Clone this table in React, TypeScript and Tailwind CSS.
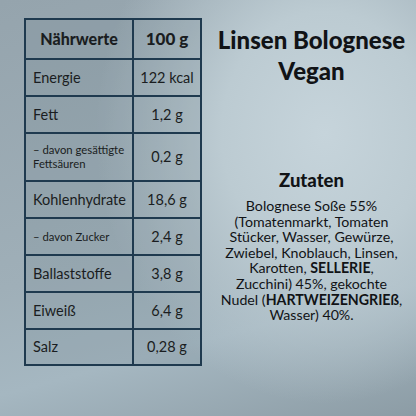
import React from 'react';

type Row = { label: React.ReactNode; value: string; h: string; small?: boolean };

const rows: Row[] = [
  { label: 'Energie', value: '122 kcal', h: 'h-[37px]' },
  { label: 'Fett', value: '1,2 g', h: 'h-[37px]' },
  {
    label: (
      <>
        – davon gesättigte
        <br />
        Fettsäuren
      </>
    ),
    value: '0,2 g',
    h: 'h-[48px]',
    small: true,
  },
  { label: 'Kohlenhydrate', value: '18,6 g', h: 'h-[37px]' },
  { label: '– davon Zucker', value: '2,4 g', h: 'h-[37px]', small: true },
  { label: 'Ballaststoffe', value: '3,8 g', h: 'h-[37px]' },
  { label: 'Eiweiß', value: '6,4 g', h: 'h-[37px]' },
  { label: 'Salz', value: '0,28 g', h: 'h-[36px]' },
];

const NutritionTable: React.FC = () => {
  return (
    <div
      className="grid grid-cols-[108px_68px] border-l-2 border-t-2 border-[#1f3a4f] text-[#1a1d21]"
      style={{ fontFamily: 'Lato, "Noto Sans", sans-serif' }}
    >
      <div className="h-[40px] flex items-center justify-center border-r-2 border-b-2 border-[#1f3a4f] bg-[#6f808b]/20 text-[16px] font-black">
        Nährwerte
      </div>
      <div className="h-[40px] flex items-center justify-center border-r-2 border-b-2 border-[#1f3a4f] bg-[#6f808b]/20 text-[17px] font-black">
        100 g
      </div>
      {rows.map((r, i) => (
        <React.Fragment key={i}>
          <div
            className={`${r.h} flex items-center pl-[7px] border-r-2 border-b-2 border-[#1f3a4f] bg-[#6f808b]/20 ${
              r.small ? 'text-[11.3px] leading-[14px]' : 'text-[14.5px]'
            }`}
          >
            <span>{r.label}</span>
          </div>
          <div
            className={`${r.h} flex items-center justify-center border-r-2 border-b-2 border-[#1f3a4f] bg-[#6f808b]/20 text-[14.5px]`}
          >
            {r.value}
          </div>
        </React.Fragment>
      ))}
    </div>
  );
};

const App: React.FC = () => {
  return (
    <div className="w-[416px] h-[416px] overflow-hidden flex bg-[radial-gradient(ellipse_55%_65%_at_78%_32%,#c6d4db_0%,#bccbd2_45%,transparent_100%),linear-gradient(165deg,#95a4ad_0%,#9fafb8_55%,#a5b7c1_75%,#8c9ca5_100%)]">
      <div className="pl-[24px] pt-[18px]">
        <NutritionTable />
      </div>
      <div
        className="flex-1 flex flex-col items-center pl-[5px] pt-[24px] text-[#111316] text-center"
        style={{ fontFamily: 'Lato, "Noto Sans", sans-serif' }}
      >
        <h1 className="text-[24px] leading-[31px] font-black">
          Linsen Bolognese
          <br />
          Vegan
        </h1>
        <h2 className="mt-[82px] text-[18.5px] leading-[24px] font-black">Zutaten</h2>
        <p className="mt-[6px] text-[14.2px] leading-[15.6px]">
          Bolognese Soße 55%
          <br />
          (Tomatenmarkt, Tomaten
          <br />
          Stücker, Wasser, Gewürze,
          <br />
          Zwiebel, Knoblauch, Linsen,
          <br />
          Karotten, <b>SELLERIE</b>,
          <br />
          Zucchini) 45%, gekochte
          <br />
          Nudel (<b>HARTWEIZENGRIEß</b>,
          <br />
          Wasser) 40%.
        </p>
      </div>
    </div>
  );
};

export default App;
